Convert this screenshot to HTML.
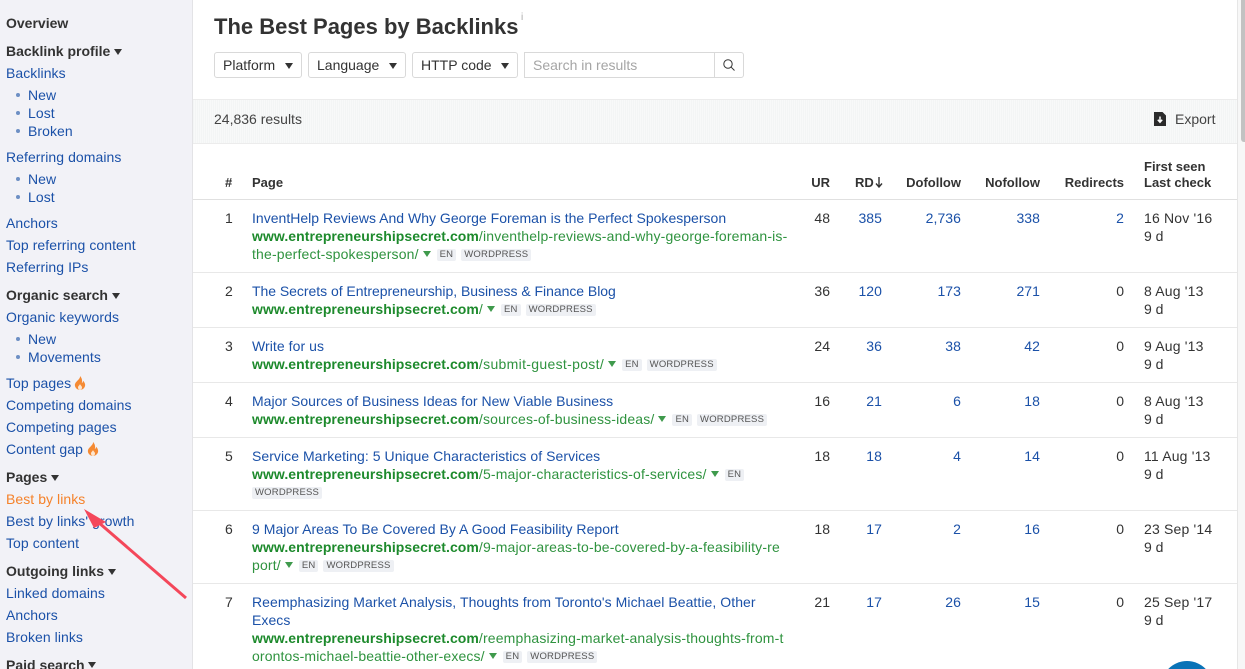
<!DOCTYPE html>
<html><head><meta charset="utf-8"><style>
html,body{margin:0;padding:0;width:1245px;height:669px;overflow:hidden}
#w{position:relative;width:1245px;height:669px;overflow:hidden;background:#fff;font-family:"Liberation Sans",sans-serif;font-size:14px;color:#333}
#r div,#r span.a,.a{position:absolute;white-space:nowrap;line-height:18px}
.l{color:#1b51a8;letter-spacing:.06px}
.h{font-weight:bold;color:#333}
.g{color:#2f933f;letter-spacing:.16px}
.g b{color:#1d8a2c;letter-spacing:.06px}
.r{text-align:right}
.d{letter-spacing:.18px}
.th{font-weight:bold;font-size:13px;color:#333}
.tri{display:inline-block;width:0;height:0;border-left:4px solid transparent;border-right:4px solid transparent;border-top:6px solid #333;margin-left:4px;vertical-align:1px}
.gt{display:inline-block;width:0;height:0;border-left:4px solid transparent;border-right:4px solid transparent;border-top:6px solid #3f9a4c;margin:0 6px 0 4px;vertical-align:2px}
.t{display:inline-block;background:#eef0f4;color:#555;font-size:9.5px;line-height:12px;height:12px;padding:0 3px;border-radius:2px;margin-right:5px;letter-spacing:.2px;vertical-align:2px}
.bd{position:absolute;left:193px;width:1044px;height:1px;background:#e8e8e8}
.btn{position:absolute;top:52px;height:24px;border:1px solid #d9d9d9;border-radius:3px;line-height:24px;padding-left:8px;color:#333;box-sizing:content-box}
.btn i{position:absolute;right:8px;top:10px;width:0;height:0;border-left:4px solid transparent;border-right:4px solid transparent;border-top:6px solid #333}
.dot{position:absolute;left:16px;width:4px;height:4px;border-radius:2px;background:#6d8fc4}
</style></head><body><div id="w">
<div style="position:absolute;left:0;top:0;width:192px;height:669px;background:#f2f2f7;border-right:1px solid #e3e3e6"></div>
<div style="position:absolute;left:193px;top:99px;width:1044px;height:45px;background:repeating-linear-gradient(90deg,#f3f5f5 0 1px,#f8f9f9 1px 2px);border-top:1px solid #ececec;border-bottom:1px solid #ececec;box-sizing:border-box"></div>
<div style="position:absolute;left:1237px;top:0;width:8px;height:669px;background:#f7f7f7;border-left:1px solid #e6e6e6;box-sizing:border-box"></div>
<div style="position:absolute;left:1241px;top:0;width:4px;height:142px;background:#c2c2c2;border-radius:0 0 0 3px"></div>
<div id="r">
<div class="h" style="left:6px;top:14px">Overview</div>
<div class="h" style="left:6px;top:42px">Backlink profile<i class="tri"></i></div>
<div class="l" style="left:6px;top:64px">Backlinks</div>
<span class="dot" style="top:93px"></span><div class="l" style="left:28px;top:86px">New</div>
<span class="dot" style="top:111px"></span><div class="l" style="left:28px;top:104px">Lost</div>
<span class="dot" style="top:129px"></span><div class="l" style="left:28px;top:122px">Broken</div>
<div class="l" style="left:6px;top:148px">Referring domains</div>
<span class="dot" style="top:177px"></span><div class="l" style="left:28px;top:170px">New</div>
<span class="dot" style="top:195px"></span><div class="l" style="left:28px;top:188px">Lost</div>
<div class="l" style="left:6px;top:214px">Anchors</div>
<div class="l" style="left:6px;top:236px">Top referring content</div>
<div class="l" style="left:6px;top:258px">Referring IPs</div>
<div class="h" style="left:6px;top:286px">Organic search<i class="tri"></i></div>
<div class="l" style="left:6px;top:308px">Organic keywords</div>
<span class="dot" style="top:337px"></span><div class="l" style="left:28px;top:330px">New</div>
<span class="dot" style="top:355px"></span><div class="l" style="left:28px;top:348px">Movements</div>
<div class="l" style="left:6px;top:374px">Top pages</div>
<svg style="position:absolute;left:74px;top:376px" width="12" height="14" viewBox="0 0 12 14"><path d="M6 0C6.500 3 2 5 1 8c-.8 3 2 6 5 6s5.800-3 5-6c-.4-1.500-1.200-2.500-2-3.200 0 1.200-.5 2-1.200 2.200C8.500 4.500 8 2 6 0z" fill="#f58a33"/><path d="M6 8c-.5 1.500-2 2-2 3.500S5 14 6 14s2-1 2-2.500S6.500 9.500 6 8z" fill="#fde6cf"/></svg>
<div class="l" style="left:6px;top:396px">Competing domains</div>
<div class="l" style="left:6px;top:418px">Competing pages</div>
<div class="l" style="left:6px;top:440px">Content gap</div>
<svg style="position:absolute;left:87px;top:442px" width="12" height="14" viewBox="0 0 12 14"><path d="M6 0C6.500 3 2 5 1 8c-.8 3 2 6 5 6s5.800-3 5-6c-.4-1.500-1.200-2.500-2-3.200 0 1.200-.5 2-1.200 2.200C8.500 4.500 8 2 6 0z" fill="#f58a33"/><path d="M6 8c-.5 1.500-2 2-2 3.500S5 14 6 14s2-1 2-2.500S6.500 9.500 6 8z" fill="#fde6cf"/></svg>
<div class="h" style="left:6px;top:468px">Pages<i class="tri"></i></div>
<div style="left:6px;top:490px;color:#f5822a;letter-spacing:.06px">Best by links</div>
<div class="l" style="left:6px;top:512px">Best by links' growth</div>
<div class="l" style="left:6px;top:534px">Top content</div>
<div class="h" style="left:6px;top:562px">Outgoing links<i class="tri"></i></div>
<div class="l" style="left:6px;top:584px">Linked domains</div>
<div class="l" style="left:6px;top:606px">Anchors</div>
<div class="l" style="left:6px;top:628px">Broken links</div>
<div class="h" style="left:6px;top:661px;height:8px;line-height:8px">Paid search</div>
<svg style="position:absolute;left:88px;top:662px" width="8" height="6" viewBox="0 0 8 6"><path d="M0 0H8L4 6z" fill="#333"/></svg>

<div style="left:214px;top:14px;font-size:22px;font-weight:bold;line-height:26px;color:#333">The Best Pages by Backlinks</div>
<div style="left:521px;top:12px;font-size:10px;line-height:12px;color:#aaa">i</div>
</div>
<div class="btn" style="left:214px;width:78px">Platform<i></i></div>
<div class="btn" style="left:308px;width:88px">Language<i></i></div>
<div class="btn" style="left:412px;width:96px">HTTP code<i></i></div>
<div class="btn" style="left:524px;width:210px;border-radius:0 3px 3px 0;color:#a5a5a5">Search in results</div>
<div style="position:absolute;left:714px;top:53px;width:1px;height:24px;background:#d9d9d9"></div>
<svg style="position:absolute;left:722px;top:58px" width="14" height="14" viewBox="0 0 14 14"><circle cx="6" cy="6" r="4.200" fill="none" stroke="#333" stroke-width="1"/><path d="M9.200 9.200L12.500 12.500" stroke="#333" stroke-width="1"/></svg>
<div id="r2">
<div class="a" style="left:214px;top:110px;color:#444">24,836 results</div>
<svg style="position:absolute;left:1154px;top:112px" width="13" height="14" viewBox="0 0 13 14"><path d="M0 0H8.500L12 3.500V14H0z" fill="#2b2b2b"/><path d="M6 4.500V10M3.800 7.800L6 10.300 8.200 7.800" stroke="#fff" stroke-width="1.500" fill="none"/></svg>
<div class="a" style="left:1175px;top:110px;color:#444">Export</div>

<div class="a th" style="left:225px;top:174px">#</div>
<div class="a th" style="left:252px;top:174px">Page</div>
<div class="a th r" style="right:415px;top:174px">UR</div>
<div class="a th" style="left:855px;top:174px">RD</div>
<svg style="position:absolute;left:875px;top:177px" width="8" height="11" viewBox="0 0 8 11"><path d="M4 0V9M1 6.500L4 10 7 6.500" stroke="#333" stroke-width="1.400" fill="none"/></svg>
<div class="a th r" style="right:284px;top:174px">Dofollow</div>
<div class="a th r" style="right:205px;top:174px">Nofollow</div>
<div class="a th r" style="right:121px;top:174px">Redirects</div>
<div class="a th" style="left:1144px;top:158px">First seen</div>
<div class="a th" style="left:1144px;top:174px">Last check</div>
</div>
<div class="bd" style="top:199px;background:#e0e0e0"></div>
<div class="bd" style="top:272px"></div>
<div class="bd" style="top:327px"></div>
<div class="bd" style="top:382px"></div>
<div class="bd" style="top:437px"></div>
<div class="bd" style="top:510px"></div>
<div class="bd" style="top:583px"></div>

<div class="a" style="left:225px;top:209px">1</div>
<div class="a l" style="left:252px;top:209px;letter-spacing:.015px">InventHelp Reviews And Why George Foreman is the Perfect Spokesperson</div>
<div class="a g" style="left:252px;top:227px"><b>www.entrepreneurshipsecret.com</b>/inventhelp-reviews-and-why-george-foreman-is-</div>
<div class="a g" style="left:252px;top:245px">the-perfect-spokesperson/<i class="gt"></i><span class="t">EN</span><span class="t">WORDPRESS</span></div>
<div class="a r" style="right:415px;top:209px">48</div><div class="a r l" style="right:363px;top:209px">385</div><div class="a r l" style="right:284px;top:209px">2,736</div><div class="a r l" style="right:205px;top:209px">338</div><div class="a r l" style="right:121px;top:209px">2</div><div class="a d" style="left:1144px;top:209px">16 Nov '16</div><div class="a" style="left:1144px;top:227px">9 d</div>

<div class="a" style="left:225px;top:282px">2</div>
<div class="a l" style="left:252px;top:282px;letter-spacing:-.035px">The Secrets of Entrepreneurship, Business &amp; Finance Blog</div>
<div class="a g" style="left:252px;top:300px"><b>www.entrepreneurshipsecret.com</b>/<i class="gt"></i><span class="t">EN</span><span class="t">WORDPRESS</span></div>
<div class="a r" style="right:415px;top:282px">36</div><div class="a r l" style="right:363px;top:282px">120</div><div class="a r l" style="right:284px;top:282px">173</div><div class="a r l" style="right:205px;top:282px">271</div><div class="a r" style="right:121px;top:282px">0</div><div class="a d" style="left:1144px;top:282px">8 Aug '13</div><div class="a" style="left:1144px;top:300px">9 d</div>

<div class="a" style="left:225px;top:337px">3</div>
<div class="a l" style="left:252px;top:337px">Write for us</div>
<div class="a g" style="left:252px;top:355px"><b>www.entrepreneurshipsecret.com</b><span style="letter-spacing:.32px">/submit-guest-post/</span><i class="gt"></i><span class="t">EN</span><span class="t">WORDPRESS</span></div>
<div class="a r" style="right:415px;top:337px">24</div><div class="a r l" style="right:363px;top:337px">36</div><div class="a r l" style="right:284px;top:337px">38</div><div class="a r l" style="right:205px;top:337px">42</div><div class="a r" style="right:121px;top:337px">0</div><div class="a d" style="left:1144px;top:337px">9 Aug '13</div><div class="a" style="left:1144px;top:355px">9 d</div>

<div class="a" style="left:225px;top:392px">4</div>
<div class="a l" style="left:252px;top:392px;letter-spacing:.02px">Major Sources of Business Ideas for New Viable Business</div>
<div class="a g" style="left:252px;top:410px"><b>www.entrepreneurshipsecret.com</b>/sources-of-business-ideas/<i class="gt"></i><span class="t">EN</span><span class="t">WORDPRESS</span></div>
<div class="a r" style="right:415px;top:392px">16</div><div class="a r l" style="right:363px;top:392px">21</div><div class="a r l" style="right:284px;top:392px">6</div><div class="a r l" style="right:205px;top:392px">18</div><div class="a r" style="right:121px;top:392px">0</div><div class="a d" style="left:1144px;top:392px">8 Aug '13</div><div class="a" style="left:1144px;top:410px">9 d</div>

<div class="a" style="left:225px;top:447px">5</div>
<div class="a l" style="left:252px;top:447px;letter-spacing:.05px">Service Marketing: 5 Unique Characteristics of Services</div>
<div class="a g" style="left:252px;top:465px"><b>www.entrepreneurshipsecret.com</b>/5-major-characteristics-of-services/<i class="gt"></i><span class="t">EN</span></div>
<div class="a" style="left:252px;top:483px"><span class="t">WORDPRESS</span></div>
<div class="a r" style="right:415px;top:447px">18</div><div class="a r l" style="right:363px;top:447px">18</div><div class="a r l" style="right:284px;top:447px">4</div><div class="a r l" style="right:205px;top:447px">14</div><div class="a r" style="right:121px;top:447px">0</div><div class="a d" style="left:1144px;top:447px">11 Aug '13</div><div class="a" style="left:1144px;top:465px">9 d</div>

<div class="a" style="left:225px;top:520px">6</div>
<div class="a l" style="left:252px;top:520px;letter-spacing:.035px">9 Major Areas To Be Covered By A Good Feasibility Report</div>
<div class="a g" style="left:252px;top:538px"><b>www.entrepreneurshipsecret.com</b>/9-major-areas-to-be-covered-by-a-feasibility-re</div>
<div class="a g" style="left:252px;top:556px">port/<i class="gt"></i><span class="t">EN</span><span class="t">WORDPRESS</span></div>
<div class="a r" style="right:415px;top:520px">18</div><div class="a r l" style="right:363px;top:520px">17</div><div class="a r l" style="right:284px;top:520px">2</div><div class="a r l" style="right:205px;top:520px">16</div><div class="a r" style="right:121px;top:520px">0</div><div class="a d" style="left:1144px;top:520px">23 Sep '14</div><div class="a" style="left:1144px;top:538px">9 d</div>

<div class="a" style="left:225px;top:593px">7</div>
<div class="a l" style="left:252px;top:593px;letter-spacing:.065px">Reemphasizing Market Analysis, Thoughts from Toronto's Michael Beattie, Other</div>
<div class="a l" style="left:252px;top:611px">Execs</div>
<div class="a g" style="left:252px;top:629px"><b>www.entrepreneurshipsecret.com</b>/reemphasizing-market-analysis-thoughts-from-t</div>
<div class="a g" style="left:252px;top:647px;letter-spacing:.13px">orontos-michael-beattie-other-execs/<i class="gt"></i><span class="t">EN</span><span class="t">WORDPRESS</span></div>
<div class="a r" style="right:415px;top:593px">21</div><div class="a r l" style="right:363px;top:593px">17</div><div class="a r l" style="right:284px;top:593px">26</div><div class="a r l" style="right:205px;top:593px">15</div><div class="a r" style="right:121px;top:593px">0</div><div class="a d" style="left:1144px;top:593px">25 Sep '17</div><div class="a" style="left:1144px;top:611px">9 d</div>

<svg style="position:absolute;left:1161px;top:661px" width="52" height="8" viewBox="0 0 52 8"><circle cx="26" cy="26" r="26" fill="#0a73b7"/></svg>
<svg style="position:absolute;left:0;top:0" width="200" height="669" viewBox="0 0 200 669"><path d="M186 598L98 522" stroke="#f4475a" stroke-width="3" fill="none"/><path d="M84 509L106 522 94 528z" fill="#f4475a"/></svg>
</div></body></html>
